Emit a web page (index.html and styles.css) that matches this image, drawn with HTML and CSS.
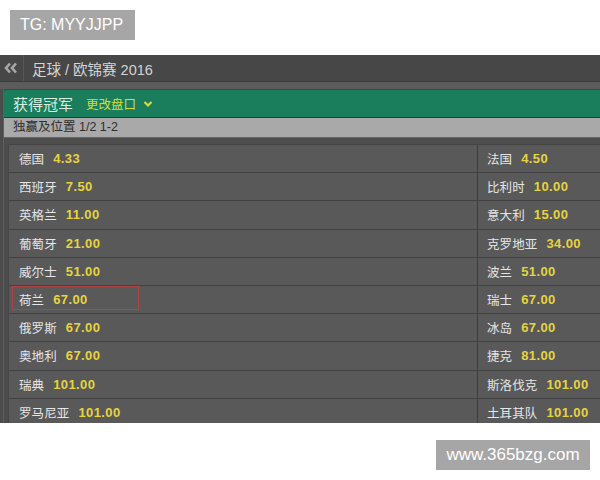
FILE: index.html
```html
<!DOCTYPE html>
<html lang="zh-CN">
<head>
  <meta charset="UTF-8">
  <meta name="viewport" content="width=device-width, initial-scale=1.0">
  <title>欧锦赛 2016</title>
  <link rel="stylesheet" href="styles.css">
</head>
<body>
  <div class="tag">TG: MYYJJPP</div>
  <div class="screen">
    <div class="topbar">
      <span class="back">
        <svg width="14" height="12" viewBox="0 0 14 12"><path d="M6 1.5 L2 6 L6 10.5 M12 1.5 L8 6 L12 10.5" fill="none" stroke="#a8a8a8" stroke-width="2.6"/></svg>
      </span>
      <span class="crumb">足球 / 欧锦赛 2016</span>
    </div>
    <div class="band"></div>
    <div class="panel">
      <div class="market">
        <span class="market-title">获得冠军</span>
        <span class="change">更改盘口</span>
        <svg class="chev" width="10" height="8" viewBox="0 0 10 8"><path d="M1.5 2 L5 5.5 L8.5 2" fill="none" stroke="#d6dc3c" stroke-width="2.2"/></svg>
      </div>
      <div class="sub">独赢及位置 1/2 1-2</div>
      <div class="gap"></div>
      <div class="odds">
        <div class="row"><div class="cell"><span class="name">德国</span><span class="price">4.33</span></div><div class="cell right"><span class="name">法国</span><span class="price">4.50</span></div></div>
        <div class="row"><div class="cell"><span class="name">西班牙</span><span class="price">7.50</span></div><div class="cell right"><span class="name">比利时</span><span class="price">10.00</span></div></div>
        <div class="row"><div class="cell"><span class="name">英格兰</span><span class="price">11.00</span></div><div class="cell right"><span class="name">意大利</span><span class="price">15.00</span></div></div>
        <div class="row"><div class="cell"><span class="name">葡萄牙</span><span class="price">21.00</span></div><div class="cell right"><span class="name">克罗地亚</span><span class="price">34.00</span></div></div>
        <div class="row"><div class="cell"><span class="name">威尔士</span><span class="price">51.00</span></div><div class="cell right"><span class="name">波兰</span><span class="price">51.00</span></div></div>
        <div class="row"><div class="cell"><span class="mark"></span><span class="name">荷兰</span><span class="price">67.00</span></div><div class="cell right"><span class="name">瑞士</span><span class="price">67.00</span></div></div>
        <div class="row"><div class="cell"><span class="name">俄罗斯</span><span class="price">67.00</span></div><div class="cell right"><span class="name">冰岛</span><span class="price">67.00</span></div></div>
        <div class="row"><div class="cell"><span class="name">奥地利</span><span class="price">67.00</span></div><div class="cell right"><span class="name">捷克</span><span class="price">81.00</span></div></div>
        <div class="row"><div class="cell"><span class="name">瑞典</span><span class="price">101.00</span></div><div class="cell right"><span class="name">斯洛伐克</span><span class="price">101.00</span></div></div>
        <div class="row"><div class="cell"><span class="name">罗马尼亚</span><span class="price">101.00</span></div><div class="cell right"><span class="name">土耳其队</span><span class="price">101.00</span></div></div>
      </div>
    </div>
  </div>
  <div class="footer">
    <div class="site">www.365bzg.com</div>
  </div>
</body>
</html>
```
FILE: styles.css
```css
body {
  margin: 0;
  background: #fff;
  font-family: "Liberation Sans", "Noto Sans CJK SC", sans-serif;
}

.tag {
  display: inline-block;
  margin: 10px 0 0 10px;
  width: 125px;
  height: 30px;
  line-height: 30px;
  background: #a6a6a6;
  color: #fff;
  font-size: 16px;
  text-indent: 10px;
}

.screen {
  margin-top: 15px;
  height: 368px;
  background: #4c4c4c;
  overflow: hidden;
}

.topbar {
  display: flex;
  align-items: center;
  height: 26px;
  background: #474747;
  border-bottom: 1px solid #3c3c3c;
}

.back {
  display: flex;
  align-items: center;
  justify-content: center;
  width: 22px;
  height: 26px;
  padding-right: 1px;
  border-right: 1px solid #575757;
}

.crumb {
  padding-left: 8px;
  color: #d4d4d4;
  font-size: 14.5px;
}

.band {
  height: 7px;
  background: #5c5c5c;
}

.panel {
  margin-left: 3px;
  border-left: 1px solid #5e5e5e;
}

.market {
  display: flex;
  align-items: center;
  height: 27px;
  padding-left: 9px;
  background: #1a7e5c;
  border-top: 1px solid #0f5e42;
  border-bottom: 1px solid #0c4a34;
  border-top-left-radius: 3px;
}

.market-title {
  color: #d8efe2;
  font-size: 15px;
}

.change {
  margin-left: 13px;
  color: #d6dc3c;
  font-size: 12.5px;
}

.chev {
  margin-left: 7px;
}

.sub {
  height: 19px;
  line-height: 19px;
  padding-left: 9px;
  background: #a9a9a9;
  color: #2e2e2e;
  font-size: 12.5px;
}

.gap {
  height: 6px;
  background: #4e4e4e;
  border-top: 1px solid #666;
}

.odds {
  margin-left: 4px;
  border-left: 1px solid #464646;
  border-top: 1px solid #444;
}

.row {
  display: grid;
  grid-template-columns: 468px 1fr;
  height: 27.2px;
  background: #595959;
  border-bottom: 1px solid #414141;
}

.cell {
  position: relative;
  display: flex;
  align-items: center;
  padding-left: 10px;
}

.cell.right {
  padding-left: 9px;
  border-left: 1px solid #3e3e3e;
}

.name {
  color: #e6e6e6;
  font-size: 12.5px;
  letter-spacing: 0.1px;
}

.price {
  margin-left: 9px;
  color: #e6d43c;
  font-size: 13px;
  font-weight: bold;
  letter-spacing: 0.4px;
}

.mark {
  position: absolute;
  left: 3px;
  top: 0;
  width: 125px;
  height: 22px;
  border: 1px solid #b04444;
}

.footer {
  display: flex;
  justify-content: flex-end;
  padding: 17px 10px 0 0;
}

.site {
  width: 154px;
  height: 30px;
  line-height: 30px;
  background: #a6a6a6;
  color: #fff;
  font-size: 17px;
  text-align: center;
}
```
